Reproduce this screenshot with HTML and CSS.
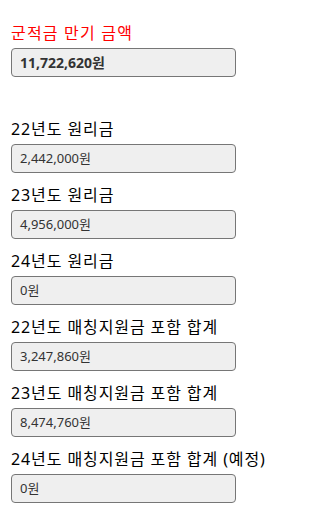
FILE: index.html
```html
<!DOCTYPE html>
<html lang="ko">
    <head>
        <meta charset="UTF-8" />
        <meta name="viewport" content="width=device-width, initial-scale=1.0" />
        <title>군적금 만기 금액</title>
        <link rel="stylesheet" href="styles.css">
    </head>
    <body>
        <div class="container">
            <div class="form-group total">
                <label for="total">군적금 만기 금액</label>
                <div class="value strong" id="total">11,722,620원</div>
            </div>

            <div class="form-group">
                <label>22년도 원리금</label>
                <div class="value">2,442,000원</div>
            </div>
            <div class="form-group">
                <label>23년도 원리금</label>
                <div class="value">4,956,000원</div>
            </div>
            <div class="form-group">
                <label>24년도 원리금</label>
                <div class="value">0원</div>
            </div>
            <div class="form-group">
                <label>22년도 매칭지원금 포함 합계</label>
                <div class="value">3,247,860원</div>
            </div>
            <div class="form-group">
                <label>23년도 매칭지원금 포함 합계</label>
                <div class="value">8,474,760원</div>
            </div>
            <div class="form-group">
                <label>24년도 매칭지원금 포함 합계 (예정)</label>
                <div class="value">0원</div>
            </div>
        </div>
    </body>
</html>
```

FILE: styles.css
```css
body {
    font-family: "Noto Sans", "Noto Sans CJK KR", sans-serif;
    margin: 0;
    padding: 0;
    background-color: #fff;
    color: #000;
}
.container {
    padding: 23px 0 0 11px;
    width: 225px;
}
.form-group {
    margin-bottom: 12px;
}
.form-group.total {
    margin-bottom: 42px;
}
label {
    display: block;
    font-size: 16px;
    line-height: 20px;
    letter-spacing: 0.9px;
    margin-bottom: 5px;
    white-space: nowrap;
}
.total label {
    color: #f00;
    letter-spacing: 1.2px;
}
.value {
    box-sizing: border-box;
    height: 29px;
    line-height: 27px;
    padding: 0 8px;
    border: 1px solid #767676;
    border-radius: 4px;
    background-color: #efefef;
    color: #333;
    font-size: 13px;
}
.value.strong {
    font-weight: bold;
    font-size: 14px;
}
```
